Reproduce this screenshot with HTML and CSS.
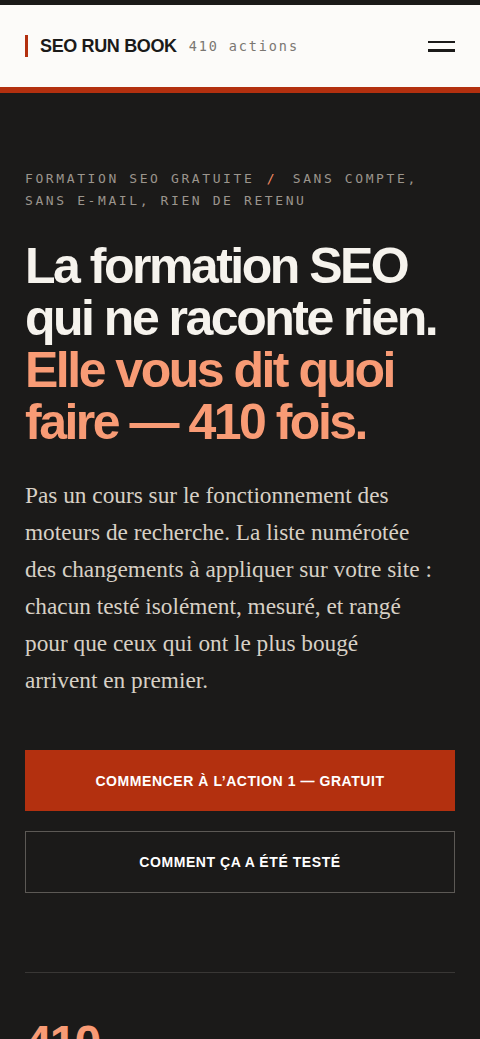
FILE: index.html
```html
<!DOCTYPE html>
<html lang="fr">
<head>
<meta charset="utf-8">
<meta name="viewport" content="width=device-width, initial-scale=1">
<title>SEO Run Book</title>
<link rel="stylesheet" href="styles.css">
</head>
<body>
<div class="page">
  <header class="topbar">
    <div class="brand">
      <span class="brand-mark"></span>
      <span class="brand-name">SEO RUN BOOK</span>
      <span class="brand-count">410 actions</span>
    </div>
    <button class="menu" aria-label="Menu">
      <span class="menu-line"></span>
      <span class="menu-line"></span>
    </button>
  </header>

  <main class="hero">
    <p class="eyebrow"><span class="eb">FORMATION SEO GRATUITE</span> <span class="eb slash">/</span> <span class="eb">SANS COMPTE,</span> <span class="eb">SANS E-MAIL, RIEN DE RETENU</span></p>
    <h1 class="title">La formation SEO qui ne raconte rien. <span class="accent">Elle vous dit quoi faire — 410 fois.</span></h1>
    <p class="lead">Pas un cours sur le fonctionnement des moteurs de recherche. La liste numérotée des changements à appliquer sur votre site : chacun testé isolément, mesuré, et rangé pour que ceux qui ont le plus bougé arrivent en premier.</p>
    <div class="actions">
      <a class="btn btn-primary" href="#">COMMENCER À L’ACTION 1 — GRATUIT</a>
      <a class="btn btn-ghost" href="#">COMMENT ÇA A ÉTÉ TESTÉ</a>
    </div>
    <hr class="divider">
    <div class="stat">410</div>
  </main>
</div>
</body>
</html>
```

FILE: styles.css
```css
* { box-sizing: border-box; }
html, body { margin: 0; padding: 0; }
body {
  background: #1b1a19;
  color: #f4f1ea;
  font-family: "Liberation Sans", Arial, sans-serif;
  overflow: hidden;
}
.page {
  padding-top: 5px;
}
.topbar {
  background: #fcfbf9;
  height: 88px;
  border-bottom: 6px solid #b3300f;
  display: flex;
  align-items: center;
  justify-content: space-between;
  padding: 0 25px 0 25px;
}
.brand {
  display: flex;
  align-items: center;
}
.brand-mark {
  width: 3px;
  height: 22px;
  background: #b3300f;
  margin-right: 12px;
}
.brand-name {
  font-family: "Liberation Sans", Arial, sans-serif;
  font-weight: 700;
  font-size: 18px;
  letter-spacing: -0.02em;
  color: #1b1a19;
  margin-right: 12px;
}
.brand-count {
  font-family: "DejaVu Sans Mono", "Liberation Mono", monospace;
  font-size: 13.5px;
  letter-spacing: 0.14em;
  color: #7a7671;
  white-space: pre;
}
.menu {
  background: none;
  border: 0;
  padding: 0;
  width: 27px;
  display: flex;
  flex-direction: column;
  gap: 6px;
  cursor: pointer;
}
.menu-line {
  display: block;
  height: 2.5px;
  width: 27px;
  background: #1b1a19;
}
.hero {
  padding: 75px 25px 0 25px;
}
.eyebrow {
  margin: 0;
  font-family: "DejaVu Sans Mono", "Liberation Mono", monospace;
  font-size: 13px;
  line-height: 22px;
  letter-spacing: 0.2em;
  color: #9b958d;
}
.eb {
  white-space: nowrap;
}
.slash {
  color: #f28a62;
  margin: 0 5px 0 2px;
}
.title {
  margin: 28px 0 0 0;
  font-family: "Liberation Sans", Arial, sans-serif;
  font-weight: 700;
  font-size: 50px;
  line-height: 52px;
  letter-spacing: -0.05em;
  color: #f6f3ed;
}
.accent {
  color: #f89b75;
}
.lead {
  margin: 29px 0 0 0;
  max-width: 409px;
  font-family: "Liberation Serif", "Times New Roman", serif;
  font-size: 23.3px;
  line-height: 37px;
  color: #d7d0c5;
}
.actions {
  margin-top: 51px;
  display: flex;
  flex-direction: column;
  gap: 20px;
}
.btn {
  display: flex;
  align-items: center;
  justify-content: center;
  height: 62px;
  font-family: "Liberation Sans", Arial, sans-serif;
  font-weight: 700;
  font-size: 14px;
  letter-spacing: 0.04em;
  color: #ffffff;
  text-decoration: none;
}
.btn-primary {
  background: #b3300f;
  height: 61px;
}
.btn-ghost {
  border: 1px solid #5c5955;
}
.divider {
  margin: 79px 0 0 0;
  border: 0;
  height: 1px;
  background: #393735;
}
.stat {
  margin-top: 46px;
  font-family: "Liberation Sans", Arial, sans-serif;
  font-weight: 700;
  font-size: 48px;
  line-height: 1;
  letter-spacing: -0.04em;
  color: #f89b75;
}
```
